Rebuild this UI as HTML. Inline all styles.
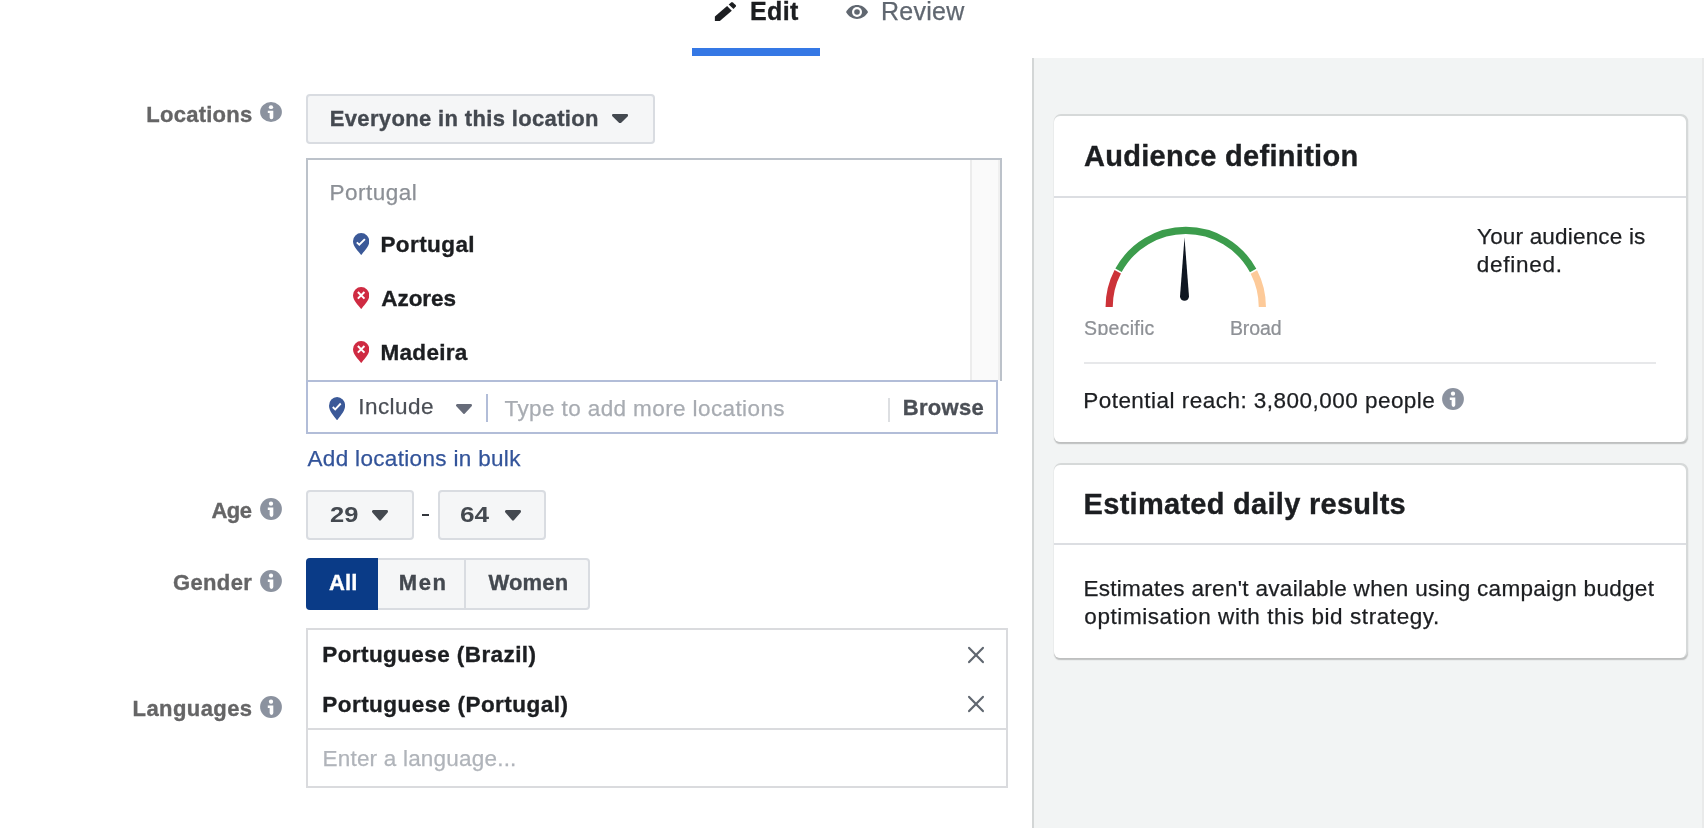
<!DOCTYPE html>
<html><head><meta charset="utf-8"><title>Edit</title>
<style>
html,body{margin:0;padding:0;background:#fff;}
body{width:1704px;height:828px;position:relative;overflow:hidden;font-family:"Liberation Sans",sans-serif;}
.b{position:absolute;display:block;}
.t{position:absolute;white-space:pre;line-height:1;font-family:"Liberation Sans",sans-serif;-webkit-text-stroke:0.25px currentColor;}
#root{position:absolute;left:0;top:0;width:1704px;height:828px;overflow:hidden;background:#fff;will-change:transform;}
</style></head><body><div id="root">
<div class="b" style="left:1032px;top:58px;width:672px;height:770px;background:#f2f4f4;border-left:2px solid #d3d6d6;box-sizing:border-box;"></div>
<div class="b" style="left:1702px;top:58px;width:2px;height:770px;background:#e9eaea;"></div>
<div class="b" style="left:1054px;top:116px;width:632px;height:326px;background:#fff;border-radius:6px;box-shadow:1px -1px 0 1px #d6d9d9,1px 1.2px 1.2px 0.3px rgba(0,0,0,.22);"></div>
<div class="b" style="left:1054px;top:465px;width:632px;height:193px;background:#fff;border-radius:6px;box-shadow:1px -1px 0 1px #d6d9d9,1px 1.2px 1.2px 0.3px rgba(0,0,0,.22);"></div>
<div class="b" style="left:1054px;top:196px;width:632px;height:2px;background:#dcdee2;"></div>
<div class="b" style="left:1054px;top:543px;width:632px;height:2px;background:#dcdee2;"></div>
<div class="b" style="left:1084px;top:362px;width:572px;height:2px;background:#e7e8ea;"></div>
<span class="t" style="left:1083.98px;top:142.00px;font-size:29px;color:#1c1e21;letter-spacing:0.283px;font-weight:bold;-webkit-text-stroke:0.35px currentColor;">Audience definition</span>
<span class="t" style="left:1083.62px;top:490.00px;font-size:29px;color:#1c1e21;letter-spacing:0.283px;font-weight:bold;-webkit-text-stroke:0.35px currentColor;">Estimated daily results</span>
<span class="t" style="left:1477.04px;top:226.00px;font-size:22.5px;color:#1c1e21;letter-spacing:0.183px;">Your audience is</span>
<span class="t" style="left:1476.70px;top:254.00px;font-size:22.5px;color:#1c1e21;letter-spacing:0.734px;">defined.</span>
<span class="t" style="left:1083.20px;top:390.00px;font-size:22.5px;color:#1c1e21;letter-spacing:0.473px;">Potential reach: 3,800,000 people</span>
<span class="t" style="left:1083.40px;top:578.00px;font-size:22.5px;color:#1c1e21;letter-spacing:0.306px;">Estimates aren't available when using campaign budget</span>
<span class="t" style="left:1084.30px;top:606.00px;font-size:22.5px;color:#1c1e21;letter-spacing:0.578px;">optimisation with this bid strategy.</span>
<svg class="b" style="left:1441px;top:387px" width="24" height="24" viewBox="-12 -12 24 24"><g transform="scale(1 1.0)"><circle cx="0" cy="0" r="10.9" fill="#8b929f"/><circle cx="0" cy="-5.3" r="2.15" fill="#fff"/><path d="M-3.2 -1.4 H2.3 V6.1 A1.825 1.8 0 0 1 -1.35 6.1 V1 H-3.2 Z" fill="#fff"/></g></svg>
<svg class="b" style="left:0;top:0" width="1704" height="340" viewBox="0 0 1704 340"><path d="M1109.15 307.00 A76.6 76.6 0 0 1 1117.74 271.75" fill="none" stroke="#cc3238" stroke-width="7.2"/><path d="M1118.50 270.33 A76.6 76.6 0 0 1 1253.13 270.57" fill="none" stroke="#3c9c4c" stroke-width="7.2"/><path d="M1253.88 271.99 A76.6 76.6 0 0 1 1262.35 307.00" fill="none" stroke="#fdca99" stroke-width="7.2"/><path d="M1184.5 237.5 L1189 296.5 A4.5 4.2 0 0 1 1180 296.5 Z" fill="#0f1621"/></svg>
<div class="b" style="left:1080px;top:312px;width:220px;height:23px;overflow:hidden">
<span class="t" style="left:4.12px;top:7.00px;font-size:19.5px;color:#8e9196;letter-spacing:0.274px;">Specific</span>
<span class="t" style="left:149.94px;top:7.00px;font-size:19.5px;color:#8e9196;letter-spacing:-0.085px;">Broad</span>
</div>
<span class="t" style="left:749.98px;top:-1.00px;font-size:25px;color:#1c1e21;letter-spacing:0.383px;font-weight:bold;-webkit-text-stroke:0.35px currentColor;">Edit</span>
<span class="t" style="left:880.90px;top:-1.00px;font-size:25px;color:#606770;letter-spacing:0.280px;">Review</span>
<div class="b" style="left:692px;top:48px;width:128px;height:8px;background:#3578e5;"></div>
<svg class="b" style="left:714px;top:1px" width="24" height="22" viewBox="714 1 24 22"><path d="M714.9 16.4 L727.1 6 L731.8 10.7 L719.8 20.9 H714.9 Z" fill="#1c1e21"/><path d="M728.7 4.5 L731.2 2.4 Q732 1.8 732.8 2.5 L735.7 5.1 Q736.4 5.8 735.8 6.6 L733.5 9 Z" fill="#1c1e21"/></svg>
<svg class="b" style="left:845px;top:4px" width="24" height="16" viewBox="845 4 24 16"><path d="M846 12 C849 7 853 5.1 857 5.1 C861 5.1 865 7 868.1 12 C865 17 861 18.9 857 18.9 C853 18.9 849 17 846 12 Z" fill="#606770"/><circle cx="857" cy="12" r="5" fill="#fff"/><circle cx="857" cy="12" r="2.8" fill="#606770"/></svg>
<span class="t" style="left:146.37px;top:104.00px;font-size:22px;color:#656566;letter-spacing:0.246px;font-weight:bold;-webkit-text-stroke:0.35px currentColor;">Locations</span>
<svg class="b" style="left:259px;top:99.95px" width="24" height="24" viewBox="-12 -12 24 24"><g transform="scale(1 0.913)"><circle cx="0" cy="0" r="10.9" fill="#8b929f"/><circle cx="0" cy="-5.3" r="2.15" fill="#fff"/><path d="M-3.2 -1.4 H2.3 V6.1 A1.825 1.8 0 0 1 -1.35 6.1 V1 H-3.2 Z" fill="#fff"/></g></svg>
<span class="t" style="left:211.45px;top:500.00px;font-size:22px;color:#656566;letter-spacing:-0.480px;font-weight:bold;-webkit-text-stroke:0.35px currentColor;">Age</span>
<svg class="b" style="left:259.05px;top:497px" width="24" height="24" viewBox="-12 -12 24 24"><g transform="scale(1 1.0)"><circle cx="0" cy="0" r="10.9" fill="#8b929f"/><circle cx="0" cy="-5.3" r="2.15" fill="#fff"/><path d="M-3.2 -1.4 H2.3 V6.1 A1.825 1.8 0 0 1 -1.35 6.1 V1 H-3.2 Z" fill="#fff"/></g></svg>
<span class="t" style="left:172.92px;top:572.00px;font-size:22px;color:#656566;letter-spacing:0.382px;font-weight:bold;-webkit-text-stroke:0.35px currentColor;">Gender</span>
<svg class="b" style="left:259.05px;top:568.9px" width="24" height="24" viewBox="-12 -12 24 24"><g transform="scale(1 1.0)"><circle cx="0" cy="0" r="10.9" fill="#8b929f"/><circle cx="0" cy="-5.3" r="2.15" fill="#fff"/><path d="M-3.2 -1.4 H2.3 V6.1 A1.825 1.8 0 0 1 -1.35 6.1 V1 H-3.2 Z" fill="#fff"/></g></svg>
<span class="t" style="left:132.57px;top:698.00px;font-size:22px;color:#656566;letter-spacing:0.419px;font-weight:bold;-webkit-text-stroke:0.35px currentColor;">Languages</span>
<svg class="b" style="left:259.05px;top:694.75px" width="24" height="24" viewBox="-12 -12 24 24"><g transform="scale(1 1.0)"><circle cx="0" cy="0" r="10.9" fill="#8b929f"/><circle cx="0" cy="-5.3" r="2.15" fill="#fff"/><path d="M-3.2 -1.4 H2.3 V6.1 A1.825 1.8 0 0 1 -1.35 6.1 V1 H-3.2 Z" fill="#fff"/></g></svg>
<div class="b" style="left:306px;top:94px;width:348.5px;height:49.5px;background:#f5f6f7;border:2px solid #d9dce1;border-radius:4px;box-sizing:border-box;"></div>
<span class="t" style="left:329.77px;top:108.00px;font-size:22px;color:#444950;letter-spacing:0.349px;font-weight:bold;-webkit-text-stroke:0.35px currentColor;">Everyone in this location</span>
<svg class="b" style="left:612px;top:113.8px" width="16.2" height="9.3" viewBox="0 0 16.2 9.3" preserveAspectRatio="none"><path d="M1.25 1.25 H14.95 L8.1 8.05 Z" fill="#444950" stroke="#444950" stroke-width="2.5" stroke-linejoin="round"/></svg>
<div class="b" style="left:306px;top:158px;width:696px;height:223px;border:2px solid #bcc2ca;border-bottom:none;box-sizing:border-box;background:#fff;"></div>
<div class="b" style="left:970px;top:160px;width:30px;height:220px;background:linear-gradient(90deg,#ececec 0,#ececec 1.7px,#fafafa 2.4px,#fafafa 27.6px,#f0f0f0 28.2px);"></div>
<span class="t" style="left:329.40px;top:182.00px;font-size:22.5px;color:#8c9096;letter-spacing:0.521px;">Portugal</span>
<svg class="b" style="left:352.8px;top:232.8px" width="16.3" height="22.1" viewBox="0 0 16.3 22.1" preserveAspectRatio="none"><path d="M8.15 22.1 C5.6 18.4 0 13.6 0 8.2 A8.15 8.2 0 0 1 16.3 8.2 C16.3 13.6 10.7 18.4 8.15 22.1 Z" fill="#3b5998"/><path d="M3.8 9.4 L6.3 11.75 L11.9 6.15" fill="none" stroke="#fff" stroke-width="1.9"/></svg>
<span class="t" style="left:380.44px;top:234.00px;font-size:22.5px;color:#1c1e21;letter-spacing:0.413px;font-weight:bold;-webkit-text-stroke:0.35px currentColor;">Portugal</span>
<svg class="b" style="left:352.8px;top:287px" width="16.3" height="22.1" viewBox="0 0 16.3 22.1" preserveAspectRatio="none"><path d="M8.15 22.1 C5.6 18.4 0 13.6 0 8.2 A8.15 8.2 0 0 1 16.3 8.2 C16.3 13.6 10.7 18.4 8.15 22.1 Z" fill="#cf2b42"/><path d="M4.85 5.05 L11.45 11.65 M11.45 5.05 L4.85 11.65" fill="none" stroke="#fff" stroke-width="2"/></svg>
<span class="t" style="left:381.34px;top:288.00px;font-size:22.5px;color:#1c1e21;letter-spacing:-0.075px;font-weight:bold;-webkit-text-stroke:0.35px currentColor;">Azores</span>
<svg class="b" style="left:352.8px;top:341px" width="16.3" height="22.1" viewBox="0 0 16.3 22.1" preserveAspectRatio="none"><path d="M8.15 22.1 C5.6 18.4 0 13.6 0 8.2 A8.15 8.2 0 0 1 16.3 8.2 C16.3 13.6 10.7 18.4 8.15 22.1 Z" fill="#cf2b42"/><path d="M4.85 5.05 L11.45 11.65 M11.45 5.05 L4.85 11.65" fill="none" stroke="#fff" stroke-width="2"/></svg>
<span class="t" style="left:380.44px;top:342.00px;font-size:22.5px;color:#1c1e21;letter-spacing:0.315px;font-weight:bold;-webkit-text-stroke:0.35px currentColor;">Madeira</span>
<div class="b" style="left:306px;top:380px;width:692px;height:54px;border:2px solid #b2bdd8;box-sizing:border-box;background:#fff;"></div>
<svg class="b" style="left:329px;top:396.8px" width="16.1" height="23.4" viewBox="0 0 16.3 22.1" preserveAspectRatio="none"><path d="M8.15 22.1 C5.6 18.4 0 13.6 0 8.2 A8.15 8.2 0 0 1 16.3 8.2 C16.3 13.6 10.7 18.4 8.15 22.1 Z" fill="#3b5998"/><path d="M3.8 9.4 L6.3 11.75 L11.9 6.15" fill="none" stroke="#fff" stroke-width="1.9"/></svg>
<span class="t" style="left:358.18px;top:396.00px;font-size:22.5px;color:#4b4f56;letter-spacing:0.479px;">Include</span>
<svg class="b" style="left:456px;top:403.8px" width="16" height="10" viewBox="0 0 16.2 9.3" preserveAspectRatio="none"><path d="M1.25 1.25 H14.95 L8.1 8.05 Z" fill="#676c7a" stroke="#676c7a" stroke-width="2.5" stroke-linejoin="round"/></svg>
<div class="b" style="left:486px;top:394px;width:2px;height:27.5px;background:#b2bdd8;"></div>
<span class="t" style="left:504.55px;top:398.00px;font-size:22.5px;color:#a8acb2;letter-spacing:0.395px;">Type to add more locations</span>
<div class="b" style="left:888px;top:398px;width:2px;height:23.5px;background:#dddfe2;"></div>
<span class="t" style="left:902.87px;top:397.00px;font-size:22px;color:#4b4f56;letter-spacing:0.276px;font-weight:bold;-webkit-text-stroke:0.35px currentColor;">Browse</span>
<span class="t" style="left:307.50px;top:448.00px;font-size:22.5px;color:#33549a;letter-spacing:0.328px;">Add locations in bulk</span>
<div class="b" style="left:306px;top:490px;width:108px;height:50px;background:#f5f6f7;border:2px solid #d9dce1;border-radius:4px;box-sizing:border-box;"></div>
<span class="t" style="left:329.81px;top:504.00px;font-size:22.5px;color:#444950;letter-spacing:0.000px;font-weight:bold;-webkit-text-stroke:0px currentColor;transform:scaleX(1.1325);transform-origin:0 0;">29</span>
<svg class="b" style="left:372px;top:510.2px" width="16" height="10.6" viewBox="0 0 16.2 9.3" preserveAspectRatio="none"><path d="M1.25 1.25 H14.95 L8.1 8.05 Z" fill="#444950" stroke="#444950" stroke-width="2.5" stroke-linejoin="round"/></svg>
<div class="b" style="left:422.2px;top:513.6px;width:7.1px;height:2px;background:#33373d;"></div>
<div class="b" style="left:438px;top:490px;width:108px;height:50px;background:#f5f6f7;border:2px solid #d9dce1;border-radius:4px;box-sizing:border-box;"></div>
<span class="t" style="left:460.33px;top:504.00px;font-size:22.5px;color:#444950;letter-spacing:0.000px;font-weight:bold;-webkit-text-stroke:0px currentColor;transform:scaleX(1.1630);transform-origin:0 0;">64</span>
<svg class="b" style="left:504.5px;top:510.2px" width="16" height="10.6" viewBox="0 0 16.2 9.3" preserveAspectRatio="none"><path d="M1.25 1.25 H14.95 L8.1 8.05 Z" fill="#444950" stroke="#444950" stroke-width="2.5" stroke-linejoin="round"/></svg>
<div class="b" style="left:306px;top:558px;width:283.5px;height:52px;background:#f5f6f7;border:2px solid #d9dce1;border-radius:4px;box-sizing:border-box;"></div>
<div class="b" style="left:306px;top:558px;width:72px;height:52px;background:#0a3b87;border-radius:4px 0 0 4px;"></div>
<div class="b" style="left:464px;top:560px;width:2px;height:48px;background:#d9dce1;"></div>
<span class="t" style="left:328.95px;top:572.00px;font-size:22px;color:#fff;letter-spacing:0.115px;font-weight:bold;-webkit-text-stroke:0.35px currentColor;">All</span>
<span class="t" style="left:398.77px;top:572.00px;font-size:22px;color:#444950;letter-spacing:1.575px;font-weight:bold;-webkit-text-stroke:0.35px currentColor;">Men</span>
<span class="t" style="left:488.50px;top:572.00px;font-size:22px;color:#444950;letter-spacing:0.135px;font-weight:bold;-webkit-text-stroke:0.35px currentColor;">Women</span>
<div class="b" style="left:306px;top:628px;width:702px;height:159.5px;border:2px solid #dadbde;box-sizing:border-box;background:#fff;"></div>
<div class="b" style="left:308px;top:728px;width:698px;height:2px;background:#dadbde;"></div>
<span class="t" style="left:322.24px;top:644.00px;font-size:22.5px;color:#1c1e21;letter-spacing:0.415px;font-weight:bold;-webkit-text-stroke:0.35px currentColor;">Portuguese (Brazil)</span>
<span class="t" style="left:322.24px;top:694.00px;font-size:22.5px;color:#1c1e21;letter-spacing:0.471px;font-weight:bold;-webkit-text-stroke:0.35px currentColor;">Portuguese (Portugal)</span>
<svg class="b" style="left:966px;top:644.9px" width="20" height="20" viewBox="-10 -10 20 20"><path d="M-6.9 -7.1 L6.9 7.1 M6.9 -7.1 L-6.9 7.1" fill="none" stroke="#606770" stroke-width="2.2" stroke-linecap="round"/></svg>
<svg class="b" style="left:966px;top:693.9px" width="20" height="20" viewBox="-10 -10 20 20"><path d="M-6.9 -7.1 L6.9 7.1 M6.9 -7.1 L-6.9 7.1" fill="none" stroke="#606770" stroke-width="2.2" stroke-linecap="round"/></svg>
<span class="t" style="left:322.50px;top:748.00px;font-size:22.5px;color:#b0b4ba;letter-spacing:0.206px;">Enter a language...</span>
</div></body></html>
